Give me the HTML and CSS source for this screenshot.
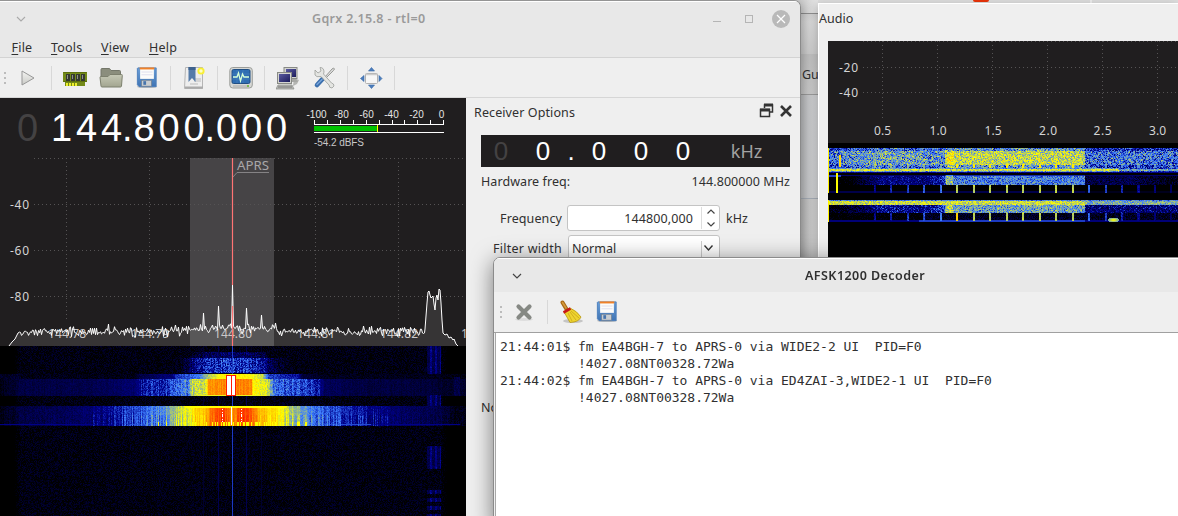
FILE: index.html
```html
<!DOCTYPE html>
<html lang="en">
<head>
<meta charset="utf-8">
<title>Gqrx</title>
<link rel="stylesheet" href="styles.css">
</head>
<body>
<svg class="defs" width="0" height="0">
  <defs>
    <linearGradient id="gBlue" x1="0" y1="0" x2="0" y2="1"><stop offset="0" stop-color="#6b9fd8"/><stop offset="1" stop-color="#3f74b4"/></linearGradient>
    <linearGradient id="gGrey" x1="0" y1="0" x2="0" y2="1"><stop offset="0" stop-color="#f4f4f2"/><stop offset="1" stop-color="#c9cac6"/></linearGradient>
    <linearGradient id="gFolder" x1="0" y1="0" x2="0" y2="1"><stop offset="0" stop-color="#c6c9b6"/><stop offset="1" stop-color="#a2a590"/></linearGradient>
    <linearGradient id="gScreen" x1="0" y1="0" x2="1" y2="1"><stop offset="0" stop-color="#5a5aa0"/><stop offset="1" stop-color="#1c1c5c"/></linearGradient>
    <symbol id="floppy" viewBox="0 0 24 24">
      <ellipse cx="12" cy="22" rx="11" ry="1.500" fill="#bbb"/>
      <path d="M2 1.500h20v20.500H3.500L1.500 20V2z" fill="url(#gBlue)" stroke="#4a7dbb"/>
      <rect x="4.500" y="1.500" width="15" height="12" fill="#fcfcfa"/>
      <rect x="4" y="1" width="16" height="2.200" fill="#f08128"/>
      <path d="M6 6h12M6 9h12" stroke="#dde" />
      <rect x="6" y="15" width="11" height="6.500" fill="#c9cdd0" stroke="#6d7f92" stroke-width=".8"/>
      <rect x="8" y="16" width="3" height="4" fill="#4775ad"/>
    </symbol>
  </defs>
</svg>

<div class="desktop">
  <div class="backdrop">
    <div class="back-title"></div>
    <div class="back-head"></div>
    <div class="back-tab">Gu</div>
    <div class="back-body"></div>
    <div class="back-foot"></div>
  </div>
  <div class="topstrip"><i></i><b></b><i></i></div>

  <section class="window main">
    <header class="titlebar">
      <svg class="chev" width="10" height="6" viewBox="0 0 10 6"><path d="M1 1l4 4 4-4" fill="none" stroke="#aaa" stroke-width="1.100"/></svg>
      <h1 class="main-title">Gqrx 2.15.8 - rtl=0</h1>
      <div class="controls">
        <svg width="10" height="18"><path d="M1 11.500h8" stroke="#b5b5b5"/></svg>
        <svg width="10" height="18"><rect x="1.500" y="5.500" width="7" height="7" fill="none" stroke="#b5b5b5"/></svg>
        <svg width="18" height="18"><circle cx="9" cy="9" r="9" fill="#b9b9b9"/><path d="M5 5l8 8M13 5l-8 8" stroke="#fff" stroke-width="1.200"/></svg>
      </div>
    </header>
    <nav class="menu"><span class="m1"><u>F</u>ile</span><span class="m2"><u>T</u>ools</span><span class="m3"><u>V</u>iew</span><span><u>H</u>elp</span></nav>
    <div class="toolbar">
      <svg class="grip" width="10" height="24"><path d="M5 6v12" stroke="#bcbcbc" stroke-width="2" stroke-dasharray="2 3"/></svg>
      <div class="btn"><svg width="24" height="24"><path d="M6 5l12 7-12 7z" fill="url(#gGrey)" stroke="#979797"/></svg></div>
      <div class="sep"></div>
      <div class="btn"><svg width="24" height="24"><path d="M0 6h24v10h-2v4H2v-4H0z" fill="#738a18"/><path d="M.5 6.500h23M.5 15.500H24" stroke="#5d700e"/><path d="M3 8h4v7H3zM8 8h4v7H8zM13 8h4v7h-4zM18 8h4v7h-4z" fill="#363a30"/><path d="M4 9h1v4H4zM9 9h1v4H9zM14 9h1v4h-1zM19 9h1v4h-1z" fill="#8d9189"/><path d="M3 18.500h12" stroke="#eef02c" stroke-width="3" stroke-dasharray="2 1"/></svg></div>
      <div class="btn"><svg width="24" height="24"><path d="M2 16V3.500Q2 2.500 3 2.500h7.500l1.500 2h8.500q1 0 1 1V16z" fill="#8b8e7d" stroke="#74776a"/><path d="M1 11.500Q1 10.500 2 10.500h7l2-2h11.500q1 0 .8 1L22.500 20q-.2 1-1 1H3q-1 0-1-1z" fill="url(#gFolder)" stroke="#7d806e"/></svg></div>
      <div class="btn"><svg width="22" height="23"><use href="#floppy"/></svg></div>
      <div class="sep"></div>
      <div class="btn"><svg width="24" height="24"><path d="M3.500 1.500h17v21h-18z" fill="#eee" stroke="#b5b5b5"/><path d="M3 21.500h18" stroke="#aaa" stroke-width="2"/><path d="M8 17h8v2H8zM12 12h7v4h-7z" fill="#d5d5d5"/><path d="M6.500 1h7v15l-3.500-4-3.500 4z" fill="#557ba8"/><path d="M6.500 1h7v3h-7z" fill="#3d618d"/><circle cx="19" cy="5" r="3.600" fill="#f8ef35"/><circle cx="19" cy="5" r="1.700" fill="#fffec7"/></svg></div>
      <div class="sep"></div>
      <div class="btn"><svg width="24" height="24"><rect x=".8" y="1.500" width="22.500" height="20.500" rx="3" fill="#d7d8d5" stroke="#9c9e9a"/><rect x="3" y="3.500" width="18" height="14" rx="1.500" fill="#2e6db2" stroke="#214f83"/><path d="M3 8h18M3 13h18M8 4v13M14 4v13" stroke="#4c83bf" stroke-width=".6"/><path d="M4 11h4l1.500-4 2 8 2-7 1.500 3h5" fill="none" stroke="#d6ffd8" stroke-width="1.300"/><path d="M4 20h16" stroke="#aaa"/><circle cx="19" cy="20" r="1" fill="#67b82b"/></svg></div>
      <div class="sep"></div>
      <div class="btn"><svg width="24" height="24"><path d="M18 12l5 2-2 4-4 2z" fill="#b5b6b3"/><rect x="8" y="1.500" width="13" height="11" fill="#d3d4d1" stroke="#888a85"/><rect x="10" y="3" width="10" height="8" fill="url(#gScreen)"/><path d="M12 13h8l2 3h-8z" fill="#a7a8a5"/><rect x="1.500" y="6.500" width="14" height="11" fill="#d3d4d1" stroke="#888a85"/><rect x="3" y="8" width="11" height="8" fill="url(#gScreen)"/><path d="M2 19h14l2 4H0z" fill="#b8b9b6" stroke="#888a85" stroke-width=".7"/><path d="M2 21h14" stroke="#777"/></svg></div>
      <div class="btn"><svg width="24" height="24"><path d="M13 11L20 3l1.500-1 1 1-1 1.500L14 12" fill="#ddd" stroke="#8c8e8a" stroke-width=".9"/><path d="M10.500 13L5 19" stroke="#3c70ae" stroke-width="4.600" stroke-linecap="round"/><path d="M10 13.500L5 18.500" stroke="#78a6dc" stroke-width="1.300" stroke-linecap="round"/><path d="M3 4l3 3 3-2-1-3.500q4 0 4 4.500l-.5 2 8 9q2.500.5 2.500 3l-2 2q-3 0-3-3l-8-8.500Q4 11.500 3 9z" fill="#e4e5e2" stroke="#9c9e9a" stroke-width=".8"/></svg></div>
      <div class="sep"></div>
      <div class="btn"><svg width="24" height="24"><rect x="6.500" y="7.500" width="12" height="10" rx="1" fill="#f6f6f6" stroke="#b1b1b1"/><path d="M7 8.500h11" stroke="#ccc" stroke-width="1.500"/><path d="M9.500 5l3-3.500 3 3.500zM9.500 19l3 3.500 3-3.500zM5 9.500L1.500 12.500 5 15.500zM20 9.500l3 3-3 3z" fill="#4d7fbe" stroke="#3465a4" stroke-width=".6"/></svg></div>
      <div class="sep"></div>
    </div>
    <div class="body">
      <div class="radio">
        <div class="freqbar">
          <div class="freq"><span class="off">0</span><span class="lead">1</span><span>4</span><span>4</span><i>.</i><span>8</span><span>0</span><span>0</span><i>.</i><span>0</span><span>0</span><span>0</span></div>
          <svg class="meter" width="150" height="60">
            <g class="meter-text" text-anchor="middle"><text x="16.500" y="20">-100</text><text x="41.500" y="20">-80</text><text x="66.500" y="20">-60</text><text x="91.500" y="20">-40</text><text x="116.500" y="20">-20</text><text x="141.500" y="20">0</text></g>
            <path d="M14 26.500h130M14 34.500h130M14.500 22v4M27.500 22v4M40.500 22v4M53.500 22v4M66.500 22v4M79.500 22v4M92.500 22v4M104.500 22v4M117.500 22v4M130.500 22v4M143.500 22v4" stroke="#fff"/>
            <rect x="14" y="28" width="63" height="5" fill="#00c000"/><path d="M77.500 27v7" stroke="#ff0"/>
            <text class="meter-val" x="14" y="48" textLength="50">-54.2 dBFS</text>
          </svg>
        </div>
        <svg class="spectrum" width="466" height="188" viewBox="0 158 466 188">
          <rect x="190" y="158" width="84" height="188" fill="#464446"/>
          <path d="M34 158.500H466M34 204.500H466M34 250.500H466M34 296.500H466M66.500 158V322M149.500 158V322M232.500 158V322M315.500 158V322M398.500 158V322" stroke="#555354" stroke-dasharray="1 3"/>
          <g class="axis"><text x="10" y="209" textLength="19">-40</text><text x="10" y="255" textLength="19">-60</text><text x="10" y="301" textLength="19">-80</text></g>
          <g class="axis freqs"><text x="48" y="338" textLength="38">144.78</text><text x="131" y="338" textLength="38">144.79</text><text x="214" y="338" textLength="38">144.80</text><text x="297" y="338" textLength="38">144.81</text><text x="380" y="338" textLength="38">144.82</text><text x="461" y="338">1</text></g>
          <path id="traceFill" fill="#fff" fill-opacity=".1"/>
          <path id="trace" fill="none" stroke="#fff"/>
          <path d="M232.500 158V285M232.500 306V346" stroke="#ff7474" stroke-width="1.200"/>
          <path d="M233 177l4-4.500h32" fill="none" stroke="#858385"/>
          <text class="marker" x="237" y="170" textLength="32" lengthAdjust="spacingAndGlyphs">APRS</text>
        </svg>
        <canvas id="waterfall" width="466" height="170"></canvas>
      </div>
      <aside class="receiver">
        <div class="dock-title"><span class="t-ro">Receiver Options</span>
          <svg width="34" height="16"><path d="M5.500 5V2h8v7H11" fill="none" stroke="#333" stroke-width="1.500"/><path d="M5 2h9" stroke="#333" stroke-width="3"/><path d="M1.500 6.500h9v7h-9z" fill="#efefef" stroke="#333" stroke-width="1.500"/><path d="M1 7h10" stroke="#333" stroke-width="3"/><path d="M22 3l10 10M32 3L22 13" stroke="#333" stroke-width="2.600"/></svg>
        </div>
        <div class="lcd"><span class="off">0</span><span>0</span><i>.</i><span>0</span><span>0</span><span>0</span><em>kHz</em></div>
        <div class="hw"><span class="t-hw">Hardware freq:</span><span class="t-mhz">144.800000 MHz</span></div>
        <div class="field"><label class="t-fr">Frequency</label>
          <div class="spin"><span>144800,000</span><svg width="18" height="24"><path d="M.5 1v22" stroke="#ddd"/><path d="M6.500 7.500l3.500-3.500 3.500 3.500M6.500 16.500l3.500 3.500 3.500-3.500" fill="none" stroke="#444" stroke-width="1.200"/></svg></div>
          <span class="unit">kHz</span></div>
        <div class="field filter"><label class="t-fw">Filter width</label>
          <div class="combo"><span>Normal</span><svg width="19" height="22"><path d="M1.500 4v16" stroke="#ccc"/><path d="M4.500 8.500l4 4.500 4-4.500" fill="none" stroke="#333" stroke-width="1.400"/></svg></div></div>
        <div class="noise">No</div>
      </aside>
    </div>
  </section>

  <section class="window audio">
    <div class="audio-title">Audio</div>
    <div class="audio-body">
      <svg class="audio-plot" width="350" height="102" viewBox="828 41 350 102">
        <path d="M863 41.500H1178M863 67.500H1178M863 92.500H1178M882.500 41V118M937.500 41V118M992.500 41V118M1047.500 41V118M1102.500 41V118M1157.500 41V118" stroke="#555354" stroke-dasharray="1 3"/>
        <g class="axis"><text x="839" y="72" textLength="19">-20</text><text x="839" y="97" textLength="19">-40</text><text x="874" y="135" textLength="17">0.5</text><text x="929.500" y="135" textLength="17">1.0</text><text x="984.500" y="135" textLength="17">1.5</text><text x="1039" y="135" textLength="18">2.0</text><text x="1093.500" y="135" textLength="18">2.5</text><text x="1149" y="135" textLength="17">3.0</text></g>
      </svg>
      <canvas id="audiofall" width="350" height="115"></canvas>
    </div>
  </section>

  <section class="window decoder">
    <header class="titlebar">
      <svg class="chev" width="10" height="6" viewBox="0 0 10 6"><path d="M1 1l4 4 4-4" fill="none" stroke="#444" stroke-width="1.200"/></svg>
      <h2 class="dec-title">AFSK1200 Decoder</h2>
    </header>
    <div class="toolbar">
      <svg class="grip" width="10" height="24"><path d="M5 6v12" stroke="#bcbcbc" stroke-width="2" stroke-dasharray="2 3"/></svg>
      <div class="btn"><svg width="24" height="24"><ellipse cx="12" cy="19.500" rx="9" ry="1.500" fill="#ddd"/><path d="M6.500 6.500l11 11M17.500 6.500l-11 11" stroke="#868984" stroke-width="4.200" stroke-linecap="round"/></svg></div>
      <div class="sep"></div>
      <div class="btn"><svg width="24" height="24"><ellipse cx="14" cy="21" rx="10" ry="2" fill="#c5c5c5"/><path d="M3.500 2.500L8 10" stroke="#a96a17" stroke-width="4" stroke-linecap="round"/><path d="M3.500 2.500L7 8" stroke="#d69a3c" stroke-width="1.500" stroke-linecap="round"/><path d="M5 12l6-4q7 3 11 9-2 5-11 5.500Q8 17 5 12z" fill="#eed42f" stroke="#b89710" stroke-width=".8"/><path d="M9 13l4 8M11 12l6 8M12 11l8 7" stroke="#c9a51c" stroke-width=".8"/><path d="M4.500 12.500L11.500 8.500" stroke="#c81818" stroke-width="2.600"/></svg></div>
      <div class="btn"><svg width="22" height="23"><use href="#floppy"/></svg></div>
    </div>
    <pre class="log">21:44:01$ fm EA4BGH-7 to APRS-0 via WIDE2-2 UI  PID=F0
          !4027.08NT00328.72Wa
21:44:02$ fm EA4BGH-7 to APRS-0 via ED4ZAI-3,WIDE2-1 UI  PID=F0
          !4027.08NT00328.72Wa</pre>
  </section>
</div>
<script src="plots.js"></script>
</body>
</html>
```
FILE: styles.css
```css
* { box-sizing: border-box; }
body {
  margin: 0;
  font-family: "Noto Sans", "Open Sans", sans-serif;
  font-size: 12.500px;
  color: #303030;
}
svg, canvas { display: block; flex: none; }
.defs { position: absolute; }
.desktop { position: relative; width: 1178px; height: 516px; overflow: hidden; background: #cdced0; }

/* windows behind the application */
.backdrop { position: absolute; left: 780px; top: 0; width: 38px; height: 258px; display: flex; flex-direction: column; }
.back-title { height: 14px; background: linear-gradient(90deg, #d0d0d0 20px, #e4e4e4); border-bottom: 1px solid #8f8f8f; }
.back-head { height: 40px; background: linear-gradient(#d2d2d2, #dadada 8px, #cdcdcd); }
.back-tab { height: 41px; line-height: 42px; padding-left: 22px; background: linear-gradient(#c1c1c1, #cacaca); border-bottom: 1px solid #9b9b9b; }
.back-body { height: 104px; background: linear-gradient(90deg, #bdbec0 20px, #d2d3d5); border-bottom: 1px solid #a5acb5; }
.back-foot { flex: 1; background: linear-gradient(90deg, #b9b9b9 20px, #d2d2d2); }
.topstrip { position: absolute; left: 818px; top: 0; right: 0; height: 4px; display: flex; background: #dcdcdc; }
.topstrip i { width: 155px; }
.topstrip b { width: 16px; height: 2px; background: #e8330a; border-radius: 0 0 4px 4px; }
.topstrip b + i { width: 103px; border-right: 2px solid #ececec; }

.window { position: absolute; background: #efefef; }
.titlebar { display: flex; align-items: center; background: #e8e8e8; }
.chev { margin-left: 16px; }
h1, h2 { margin: 0; font-size: 12.500px; white-space: nowrap; font-weight: 600; }

.main {
  left: 0; top: 0; width: 801px; height: 516px;
  border-top: 1px solid #949494; border-right: 1px solid #8a8a8a;
  border-top-right-radius: 7px;
  box-shadow: 2px 3px 12px rgba(0, 0, 0, .3);
  overflow: hidden;
}
.main .titlebar { height: 34px; border-top: 1px solid #fff; }
.main-title { color: #9a9a9a; margin-left: 286px; letter-spacing: .34px; }
.controls { display: flex; gap: 22px; margin: 0 10px 0 auto; }
.controls svg:last-child { margin-left: -4px; }
.menu { display: flex; height: 23px; padding: 4px 0 0 11.500px; line-height: 18px; letter-spacing: .22px; background: #e8e8e8; border-bottom: 1px solid #d3d3d3; }
.menu u { text-underline-offset: 2px; }
.m1 { width: 39.500px; }
.m2 { width: 50px; }
.m3 { width: 48px; }
.toolbar { display: flex; align-items: center; height: 40px; background: #efefef; border-bottom: 1px solid #d6d6d6; }
.btn { width: 36px; display: flex; justify-content: center; }
.sep { width: 11px; height: 24px; background: linear-gradient(90deg, transparent 5px, #d8d8d8 5px, #d8d8d8 6px, transparent 6px); }
.body { display: flex; height: 418px; }

.radio { width: 466px; background: #201e1f; }
.freqbar { display: flex; height: 60px; }
.freq { display: flex; width: 300px; padding-left: 15px; font: 38px/60px "Liberation Sans", sans-serif; color: #fff; }
.freq span { width: 25px; text-align: center; }
.freq .lead { margin-left: 9px; }
.freq i { width: 7.500px; font-style: normal; text-indent: -2px; }
.off { color: #444243; }
.meter-text, .meter-val { font: 10px "Liberation Sans", sans-serif; fill: #e6e6e6; }
.meter-val { fill: #c8c8c8; }
.axis { font-size: 12px; fill: #d4d4d4; }
.freqs { fill: #c4c2c3; }
.marker { font-size: 12.500px; fill: #a9a7a9; }

.receiver { width: 334px; display: flex; flex-direction: column; }
.dock-title { display: flex; justify-content: space-between; align-items: center; height: 27px; padding: 0 6px 0 8px; }
.dock-title svg { margin: -1px 1px 0 0; }
.t-ro { padding-top: 2px; letter-spacing: .1px; }
.lcd { display: flex; height: 32px; margin: 10px 10px 0 15px; background: #201e1f; color: #fff; font: 26px/33px "Liberation Sans", sans-serif; }
.lcd span { width: 42px; text-align: center; text-indent: -2px; }
.lcd i { width: 14px; font-style: normal; text-align: center; text-indent: -2px; }
.lcd em { flex: 1; font: 18px/33px "Noto Sans", sans-serif; color: #a3a3a3; text-align: center; text-indent: -2px; }
.hw { display: flex; justify-content: space-between; height: 29px; margin: 0 10px 0 15px; line-height: 29px; letter-spacing: .07px; }
.field { display: flex; align-items: center; margin-top: 9px; height: 26px; }
.field label { width: 96px; text-align: right; letter-spacing: .1px; }
.spin { display: flex; align-items: center; justify-content: flex-end; width: 153px; height: 26px; margin-left: 5px; background: #fff; border: 1px solid #c4c4c4; border-radius: 3px; letter-spacing: .1px; }
.spin span { margin-right: 8px; }
.unit { margin-left: 6px; }
.filter { margin-top: 4px; }
.t-fw { letter-spacing: .25px !important; }
.combo { display: flex; align-items: center; justify-content: space-between; width: 152px; height: 26px; margin-left: 6px; padding-left: 3px; background: #fff; border: 1px solid #c4c4c4; border-radius: 3px; }
.noise { margin: 137px 0 0 15px; padding-top: 1px; line-height: 18px; width: 13px; white-space: nowrap; }

.audio { left: 818px; top: 3px; width: 360px; height: 256px; border-top: 1px solid #fff; border-left: 1px solid #fff; box-shadow: -2px 2px 8px rgba(0, 0, 0, .2); }
.audio-title { height: 37px; line-height: 29px; }
.audio-body { margin-left: 9px; background: #201e1f; }

.decoder { left: 493px; top: 257px; width: 700px; height: 270px; border: 1px solid #8b8b8b; border-radius: 7px 0 0 0; box-shadow: 0 4px 22px rgba(0, 0, 0, .5); overflow: hidden; display: flex; flex-direction: column; }
.decoder .titlebar { height: 34px; border-top: 1px solid #fff; }
.decoder .chev { margin-left: 18px; }
.dec-title { margin-left: 283px; letter-spacing: .45px; }
.decoder .toolbar { border-bottom-color: #a0a0a0; height: 41px; padding: 0 0 1px 2px; }
.log { flex: 1; margin: 0 0 0 1px; padding: 5px 4px; background: #fff; font: 13px/17px "DejaVu Sans Mono", monospace; letter-spacing: -.02px; color: #303030; border-left: 1px solid #a8a8a8; }
```
FILE: plots.js
```javascript
// Seeded generator so every load draws the same noise.
let seed = 1234567;
function rnd() {
  seed = (seed * 1664525 + 1013904223) >>> 0;
  return seed / 4294967296;
}

// Waterfall palette: black, blue, light blue, yellow, red, white.
function palette(i) {
  i = Math.max(0, Math.min(255, i));
  if (i < 20) return [0, 0, 0];
  if (i < 70) return [0, 0, 140 * (i - 20) / 50];
  if (i < 100) return [60 * (i - 70) / 30, 125 * (i - 70) / 30, 115 * (i - 70) / 30 + 140];
  if (i < 150) return [195 * (i - 100) / 50 + 60, 130 * (i - 100) / 50 + 125, 255 - 255 * (i - 100) / 50];
  if (i < 250) return [255, 255 - 255 * (i - 150) / 100, 0];
  return [255, 255 * (i - 250) / 5, 255 * (i - 250) / 5];
}

function interp(points, x) {
  if (x <= points[0][0]) return points[0][1];
  for (let k = 1; k < points.length; k++) {
    if (x <= points[k][0]) {
      const [x0, y0] = points[k - 1], [x1, y1] = points[k];
      return y0 + (y1 - y0) * (x - x0) / (x1 - x0);
    }
  }
  return points[points.length - 1][1];
}

function paint(id, level) {
  const canvas = document.getElementById(id);
  const ctx = canvas.getContext('2d');
  const img = ctx.createImageData(canvas.width, canvas.height);
  for (let y = 0, p = 0; y < canvas.height; y++) {
    for (let x = 0; x < canvas.width; x++, p += 4) {
      const c = palette(level(x, y));
      img.data[p] = c[0]; img.data[p + 1] = c[1]; img.data[p + 2] = c[2]; img.data[p + 3] = 255;
    }
  }
  ctx.putImageData(img, 0, 0);
}

// Spectrum trace
const pts = [[9, 346], [12, 342], [15, 339], [18, 333]];
const peaks = { 203: 313, 218: 306, 232: 285, 246: 308, 261: 315, 108: 324, 175: 325, 275: 323, 363: 326 };
for (let x = 19; x < 425; x++) {
  let base = interp([[19, 333], [60, 331], [175, 332], [190, 329], [215, 328], [270, 329], [282, 332], [424, 331]], x);
  pts.push([x + 0.5, peaks[x] || base + (rnd() + rnd() - 1) * 6]);
}
pts.push([425, 329], [426, 316], [427, 303], [428, 292], [429, 291], [430, 295], [431, 298], [433, 296],
  [434, 304], [435, 310], [436, 298], [437, 295], [438, 300], [439, 289], [440, 290], [441, 303], [442, 320], [443, 333],
  [445, 335], [447, 334], [449, 338], [451, 337], [453, 340], [454, 339], [456, 344], [458, 346]);
const line = pts.map(p => p[0] + ' ' + p[1].toFixed(1)).join('L');
document.getElementById('trace').setAttribute('d', 'M' + line);
document.getElementById('traceFill').setAttribute('d', 'M' + line + 'Z');

// Radio waterfall
const streak = Array.from({ length: 466 }, () => rnd() - 0.5);
const bandA = [[180, 20], [192, 60], [202, 78], [230, 84], [250, 80], [264, 66], [275, 38], [290, 20]];
const edgeB = [[0, 32], [20, 36], [21, 20], [135, 25], [140, 45], [172, 62], [176, 82], [200, 100], [208, 130], [222, 155], [245, 155], [262, 135], [268, 85], [298, 72], [302, 40], [330, 25]];
const bandB = [[0, 26], [20, 42], [90, 47], [135, 58], [142, 74], [165, 82], [172, 92], [188, 102], [191, 135], [206, 140], [208, 192], [232, 200], [251, 196], [253, 150], [268, 138], [273, 96], [300, 88], [318, 76], [324, 52], [360, 43], [430, 40], [450, 34]];
const bandC = [[0, 26], [20, 42], [75, 52], [95, 62], [115, 78], [140, 88], [160, 106], [178, 132], [190, 148], [194, 165], [208, 180], [210, 205], [222, 228], [232, 190], [240, 225], [250, 218], [258, 178], [276, 160], [290, 132], [308, 104], [330, 88], [350, 80], [378, 65], [400, 54], [440, 45], [455, 28]];
paint('waterfall', (x, y) => {
  const edge = interp([[0, 0], [8, 4], [20, 24], [440, 24], [455, 2], [466, 0]], x);
  let v = edge + (rnd() - 0.45) * 26 * (edge / 24);
  const n = rnd() - 0.5;
  if (y >= 6 && y < 27) {
    const a = interp(bandA, x) - (y < 12 ? 30 : 0);
    if (a > 20) v = Math.max(v, a + n * 36 + streak[x] * 16);
  }
  if (y >= 28 && y < 33) v = Math.max(v, interp(edgeB, x) + n * 16);
  if (y >= 33 && y < 50) {
    const b = interp(bandB, x);
    v = b + n * (b > 70 && b < 150 ? 26 : 12) + streak[x] * (b > 60 ? 16 : 6);
  }
  if (y >= 60 && y < 80) {
    const c = interp(bandC, x);
    v = c + n * (c > 150 ? 8 : 16) + streak[x] * (c > 60 ? 24 : 8) * (y > 68 ? 1.3 : 0.6);
    if (y < 62 && c > 140) v = 150;
    if (y > 75 && c > 104 && streak[x] > 0.2) v = 150;
  }
  if (y === 78 && x < 460) v = Math.max(v, x < 130 || x > 370 ? 68 : 88);
  if (y === 49 && x > 200 && x < 265) v = 145;
  const onCarrier = y < 28 || (y >= 49 && y < 60) || (y >= 100 && y < 123) || (y > 139 && y % 8 < 4);
  if (x >= 427 && x <= 440 && onCarrier) v = 46 + (x % 5 < 2 ? 20 : 0) + n * 16;
  if (x >= 454 && x < 460 && y > 30 && y < 50) v = 44 + n * 16;
  if (x === 218 || x === 246) v = Math.max(v, 48);
  if (x === 203 || x === 261) v = Math.max(v, 36);
  if (x === 232 && v < 120) v = 84;
  if (x >= 226 && x <= 235 && y >= 29 && y < 50) v = 240;
  if (x >= 227 && x <= 234 && y >= 30 && y < 49 && x !== 231) v = 255;
  if (x === 231 && y >= 61 && y < 79) v = 255;
  if ((x === 222 || x === 241) && y > 62 && y < 78 && streak[y] > 0) v = 255;
  return v;
});

// Audio waterfall
paint('audiofall', (x, y) => {
  const n = rnd() + rnd() - 1;
  const mid = x >= 117 && x < 257;
  const right = x >= 257;
  const tick = (x - 46.5) / 16.47;
  const onTick = x > 40 && Math.abs(tick - Math.round(tick)) < 0.062;
  const tv = mid ? 132 : right ? interp([[257, 95], [350, 50]], x) : interp([[40, 66], [117, 100]], x);
  if (x < 1 && ((y >= 5 && y < 50) || (y >= 57 && y < 79))) return 155;
  if (y >= 5 && y < 25) {
    if (x >= 11 && x <= 12 && y > 11 && y < 24) return 165;
    let v = mid ? 133 : right ? 97 : interp([[0, 98], [50, 115], [75, 112], [117, 105]], x);
    if (y < 8 || y > 21) v -= mid ? 26 : 14;
    if (onTick && y > 20) return mid ? 158 : v + 24;
    if (x > 118 && x < 126 && y > 8) v += 18;
    return v + n * 38;
  }
  if (y >= 25 && y < 29) return (y === 28 || y === 25 ? 108 : 138) + n * 28 - (x > 290 ? 24 : 0);
  if (y === 29) return 66 + n * 12;
  if (x >= 8 && x <= 9 && y >= 30 && y < 50) return 150;
  if (y >= 32 && y < 42) {
    if (y < 34 && x < 13) return 85;
    let v = mid ? 100 : right ? interp([[257, 42], [300, 46], [350, 24]], x) : interp([[20, 10], [30, 32], [55, 66], [100, 62], [116, 82]], x);
    if (x > 117 && x < 125) v += 20;
    if (y === 32) return Math.max(56, v - 20);
    return v + n * (mid ? 28 : 26);
  }
  if (y >= 42 && y < 50) {
    if (onTick) return tv + n * 10;
    return y >= 48 ? (right ? 30 : 46) : 8 + rnd() * 12;
  }
  if (y >= 57 && y < 62) return (y === 57 ? 102 : right ? 116 : 136) + n * 26;
  if (y >= 62 && y < 70) {
    let v = mid ? 112 : right ? 60 : interp([[0, 22], [30, 38], [55, 70], [100, 66], [116, 88]], x);
    if (x > 117 && x < 125) v += 18;
    return v + n * 34;
  }
  if (y >= 70 && y < 79) {
    const d = Math.hypot((x - 285) / 6, (y - 76.500) / 2.500);
    if (d < 1) return 155 - d * 45;
    if (onTick && y < 78) return Math.abs(x - 129) < 3 ? 168 : tv + n * 10;
    if (y >= 77) return x < 257 && x > 90 ? 84 : 62;
    return (x > 95 ? 30 : 16) + n * 24;
  }
  return 0;
});
```
